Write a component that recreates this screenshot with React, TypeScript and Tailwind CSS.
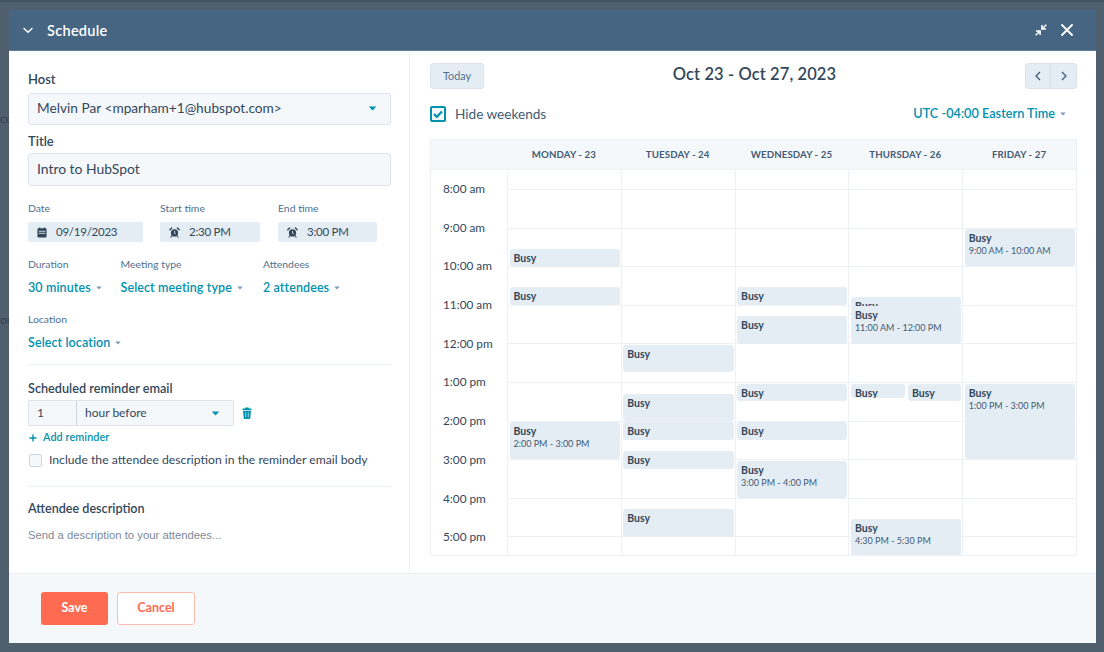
import React from "react";

const Caret = ({ className = "" }: { className?: string }) => (
  <svg viewBox="0 0 10 6" className={className}><path d="M0.5 0.5h9L5 5.5z" fill="currentColor" /></svg>
);

const Alarm = () => (
  <svg viewBox="0 0 14 14" className="w-[11px] h-[11px] text-[#33475b] shrink-0">
    <circle cx="7" cy="7.6" r="4.6" fill="currentColor" />
    <path d="M1 3.6 3.4 1.4M13 3.6 10.6 1.4" stroke="currentColor" strokeWidth="1.8" strokeLinecap="round" />
    <path d="M3.4 11.5 2.4 13M10.6 11.5l1 1.5" stroke="currentColor" strokeWidth="1.3" strokeLinecap="round" />
    <path d="M7 5v2.8l1.8 1" stroke="#e5edf4" strokeWidth="1.1" fill="none" />
  </svg>
);

const CalIcon = () => (
  <svg viewBox="0 0 12 13" className="w-[10px] h-[11px] text-[#33475b] shrink-0">
    <path d="M1.5 1.5h1V.5h1.5v1h4v-1h1.5v1h1A1 1 0 0 1 11.5 2.5V11a1.5 1.5 0 0 1-1.5 1.5H2A1.5 1.5 0 0 1 .5 11V2.5a1 1 0 0 1 1-1z" fill="currentColor" />
    <path d="M2 5h8M2 7.5h8" stroke="#e5edf4" strokeWidth="1" />
  </svg>
);

const Dropdown = ({ label, text, className = "" }: { label: string; text: string; className?: string }) => (
  <div className={className}>
    <div className="text-[10.4px] leading-[14px] text-[#516f90]">{label}</div>
    <div className="mt-[7px] flex items-center gap-[5px] text-[12.5px] tracking-[0.1px] leading-[20px] font-semibold text-[#0091ae] whitespace-nowrap">
      {text}
      <Caret className="w-[6px] h-[4px] text-[#7c98b6]" />
    </div>
  </div>
);

const Pill = ({ w, icon, text }: { w: string; icon: React.ReactNode; text: string }) => (
  <div className={`${w} pl-[9px] gap-[9px] h-[20px] bg-[#e5edf4] rounded-[2px] flex items-center text-[11.5px] tracking-[-0.25px] text-[#33475b]`}>
    {icon}
    <span>{text}</span>
  </div>
);

type Ev = { top: number; h: number; time?: string; left?: number; right?: number };

const columns: { name: string; events: Ev[] }[] = [
  {
    name: "MONDAY - 23",
    events: [
      { top: 79, h: 18 },
      { top: 117, h: 18 },
      { top: 252, h: 37, time: "2:00 PM - 3:00 PM" },
    ],
  },
  {
    name: "TUESDAY - 24",
    events: [
      { top: 175, h: 27 },
      { top: 224, h: 27 },
      { top: 252, h: 18 },
      { top: 281, h: 18 },
      { top: 339, h: 28 },
    ],
  },
  {
    name: "WEDNESDAY - 25",
    events: [
      { top: 117, h: 18 },
      { top: 146, h: 28 },
      { top: 214, h: 17 },
      { top: 252, h: 18 },
      { top: 291, h: 37, time: "3:00 PM - 4:00 PM" },
    ],
  },
  {
    name: "THURSDAY - 26",
    events: [
      { top: 127, h: 9 },
      { top: 136, h: 38, time: "11:00 AM - 12:00 PM" },
      { top: 214, h: 14, right: 56 },
      { top: 214, h: 17, left: 57 },
      { top: 349, h: 37, time: "4:30 PM - 5:30 PM" },
    ],
  },
  {
    name: "FRIDAY - 27",
    events: [
      { top: 59, h: 37, time: "9:00 AM - 10:00 AM" },
      { top: 214, h: 75, time: "1:00 PM - 3:00 PM" },
    ],
  },
];

const hours = ["8:00 am", "9:00 am", "10:00 am", "11:00 am", "12:00 pm", "1:00 pm", "2:00 pm", "3:00 pm", "4:00 pm", "5:00 pm"];

const RowLines = () => (
  <div className="flex flex-col h-full">
    <div className="h-[20px] border-b border-[#edf1f6] shrink-0" />
    {hours.map((h, i) =>
      i < 9 ? <div key={h} className="h-[38.6px] border-b border-[#edf1f6] shrink-0" /> : null
    )}
  </div>
);

export default function App() {
  return (
    <div
      className="relative w-[1104px] h-[652px] overflow-hidden bg-[#505f6d] pt-[10px] pl-[9px] text-[#33475b]"
      style={{ fontFamily: '"Lato", "Noto Sans", sans-serif' }}
    >
      <div className="absolute left-0 right-0 top-0 h-[2px] bg-[#45525f]" />
      <div className="absolute left-0 top-[110px] text-[12px] text-[#33404c]">co</div>
      <div className="absolute left-0 top-[311px] text-[12px] text-[#33404c]">or</div>

      <div className="relative w-[1087px] h-[633px] flex flex-col bg-white">
        {/* header */}
        <div className="h-[41px] shrink-0 bg-[#466582] border-b border-[#5d7c99] flex items-center text-white pl-[14px] pr-[23px]">
          <svg viewBox="0 0 12 8" className="w-[10px] h-[7px]">
            <path d="M1.2 1.5 6 6.2l4.8-4.7" stroke="white" strokeWidth="1.7" fill="none" strokeLinecap="round" strokeLinejoin="round" />
          </svg>
          <span className="ml-[14px] mt-[2px] text-[14.5px] font-semibold tracking-[0.3px]">Schedule</span>
          <div className="ml-auto flex items-center gap-[14px]">
            <svg viewBox="0 0 12 12" className="w-[12px] h-[12px]">
              <path d="M7.2 4.8 11.3.7M6.9 1v4.1H11M4.8 7.2.7 11.3M1 6.9h4.1V11" stroke="white" strokeWidth="1.5" fill="none" />
            </svg>
            <svg viewBox="0 0 12 12" className="w-[12px] h-[12px]">
              <path d="M1 1l10 10M11 1 1 11" stroke="white" strokeWidth="1.8" strokeLinecap="round" />
            </svg>
          </div>
        </div>

        {/* body */}
        <div className="h-[522px] shrink-0 flex">
          {/* left form */}
          <div className="w-[401px] shrink-0 border-r border-[#eaf0f6] pl-[19px] pr-[18px] pt-[19px]">
            <div className="text-[13px] leading-[18px] font-semibold">Host</div>
            <div className="mt-[5px] h-[32px] bg-[#f5f8fa] border border-[#dfe3eb] rounded-[3px] flex items-center pl-[8px] pr-[13px] pb-[2px] text-[13.7px]">
              Melvin Par &lt;mparham+1@hubspot.com&gt;
              <Caret className="ml-auto w-[9px] h-[5px] text-[#0091ae]" />
            </div>
            <div className="mt-[7px] text-[13px] leading-[18px] font-semibold">Title</div>
            <div className="mt-[3px] h-[33px] bg-[#f5f8fa] border border-[#dfe3eb] rounded-[3px] flex items-center pl-[8px] text-[13.9px]">
              Intro to HubSpot
            </div>

            <div className="mt-[15px] flex">
              <div className="w-[132px]">
                <div className="text-[10.4px] leading-[14px] text-[#516f90]">Date</div>
                <div className="mt-[7px]">
                  <Pill w="w-[115px]" icon={<CalIcon />} text="09/19/2023" />
                </div>
              </div>
              <div className="w-[118px]">
                <div className="text-[10.4px] leading-[14px] text-[#516f90]">Start time</div>
                <div className="mt-[7px]">
                  <Pill w="w-[100px]" icon={<Alarm />} text="2:30 PM" />
                </div>
              </div>
              <div>
                <div className="text-[10.4px] leading-[14px] text-[#516f90]">End time</div>
                <div className="mt-[7px]">
                  <Pill w="w-[99px]" icon={<Alarm />} text="3:00 PM" />
                </div>
              </div>
            </div>

            <div className="mt-[15px] flex">
              <Dropdown className="w-[92.5px]" label="Duration" text="30 minutes" />
              <Dropdown className="w-[142.5px]" label="Meeting type" text="Select meeting type" />
              <Dropdown label="Attendees" text="2 attendees" />
            </div>
            <Dropdown className="mt-[14px]" label="Location" text="Select location" />

            <div className="mt-[11px] border-t border-[#eaf0f6]" />

            <div className="mt-[14px] text-[12.7px] leading-[18px] font-semibold whitespace-nowrap">Scheduled reminder email</div>
            <div className="mt-[3px] flex items-center">
              <div className="w-[206px] h-[26px] bg-[#f5f8fa] border border-[#dfe3eb] rounded-[2px] flex items-center text-[12px]">
                <div className="w-[48px] h-full border-r border-[#cbd6e2] pl-[8px] flex items-center">1</div>
                <div className="pl-[8px]">hour before</div>
                <Caret className="ml-auto mr-[13px] w-[9px] h-[5px] text-[#0091ae]" />
              </div>
              <svg viewBox="0 0 10 12" className="ml-[8px] w-[10px] h-[12px] text-[#0091ae]">
                <path d="M3.5.5h3L7 1.5h2.5V3H.5V1.5H3zM1 3.8h8L8.3 11a1 1 0 0 1-1 .9H2.7a1 1 0 0 1-1-.9z" fill="currentColor" />
                <path d="M3.7 5.3v5M6.3 5.3v5" stroke="white" strokeWidth=".6" />
              </svg>
            </div>
            <div className="mt-[3px] flex items-center h-[17px] text-[10.8px] tracking-[0.1px] font-semibold text-[#0091ae]">
              <svg viewBox="0 0 8 8" className="ml-[1px] w-[8px] h-[8px] mr-[6px]">
                <path d="M4 .5v7M.5 4h7" stroke="#0091ae" strokeWidth="1.4" />
              </svg>
              Add reminder
            </div>
            <div className="mt-[6px] flex items-center h-[16px] text-[12.2px] whitespace-nowrap">
              <div className="ml-[1px] w-[13px] h-[13px] shrink-0 bg-[#f5f8fa] border border-[#cbd6e2] rounded-[2px]" />
              <span className="ml-[7px]">Include the attendee description in the reminder email body</span>
            </div>
            <div className="mt-[18px] border-t border-[#eaf0f6]" />
            <div className="mt-[13px] text-[12.6px] leading-[18px] font-semibold">Attendee description</div>
            <div
              className="mt-[8px] text-[11.3px] leading-[18px] text-[#7c8a99]"
              style={{ fontFamily: '"Liberation Sans", sans-serif' }}
            >
              Send a description to your attendees...
            </div>
          </div>

          {/* right calendar */}
          <div className="flex-1 pl-[20px] pr-[19px] pt-[12px] min-w-0">
            <div className="flex items-start h-[26px] relative">
              <div className="w-[54px] h-[26px] bg-[#e5edf4] border border-[#dbe4ee] rounded-[3px] flex items-center justify-center text-[10.8px] text-[#516f90]">
                Today
              </div>
              <div className="flex-1 text-center text-[16.5px] leading-[22px] font-semibold tracking-[0.1px]">Oct 23 - Oct 27, 2023</div>
              <div className="w-[52px] h-[26px] bg-[#e5edf4] border border-[#dbe4ee] rounded-[3px] flex">
                <div className="w-[25px] h-full border-r border-[#d5dfe9] flex items-center justify-center">
                  <svg viewBox="0 0 6 10" className="w-[6px] h-[10px]"><path d="M5 1 1 5l4 4" stroke="#425b76" strokeWidth="1.3" fill="none" /></svg>
                </div>
                <div className="flex-1 flex items-center justify-center">
                  <svg viewBox="0 0 6 10" className="w-[6px] h-[10px]"><path d="m1 1 4 4-4 4" stroke="#425b76" strokeWidth="1.3" fill="none" /></svg>
                </div>
              </div>
            </div>
            <div className="mt-[17px] flex items-center h-[16px]">
              <div className="w-[16px] h-[16px] border-2 border-[#0091ae] rounded-[2px] bg-[#f5f8fa] flex items-center justify-center">
                <svg viewBox="0 0 10 8" className="w-[10px] h-[8px]"><path d="M1 4l2.8 2.8L9 1.4" stroke="#0091ae" strokeWidth="2.2" fill="none" /></svg>
              </div>
              <span className="ml-[9px] text-[13.6px] text-[#425b76]">Hide weekends</span>
              <span className="ml-auto mr-[11px] flex items-center gap-[5px] text-[12.7px] font-semibold text-[#0091ae]">
                UTC -04:00 Eastern Time
                <Caret className="w-[6px] h-[4px] text-[#7c98b6]" />
              </span>
            </div>

            {/* calendar grid */}
            <div className="mt-[17px] w-[647px] h-[417px] border border-[#edf1f6] flex flex-col overflow-hidden">
              <div className="h-[30px] shrink-0 bg-[#f5f8fa] border-b border-[#edf1f6] flex">
                <div className="w-[76px] shrink-0" />
                {columns.map((c) => (
                  <div key={c.name} className="w-[113.8px] shrink-0 flex items-center justify-center text-[9.7px] font-bold tracking-[0.1px] text-[#425b76]">
                    {c.name}
                  </div>
                ))}
              </div>
              <div className="flex flex-1 min-h-0">
                <div className="w-[76px] shrink-0 pl-[12px] pt-[11px]">
                  {hours.map((h) => (
                    <div key={h} className="h-[38.7px] text-[11.8px] leading-[16px] text-[#33475b]">{h}</div>
                  ))}
                </div>
                {columns.map((c) => (
                  <div key={c.name} className="relative w-[113.8px] shrink-0 border-l border-[#edf1f6]">
                    <RowLines />
                    {c.events.map((e, i) => (
                      <div
                        key={i}
                        className="absolute bg-[#e5edf4] rounded-[3px] overflow-hidden pl-[4px] pt-[3px]"
                        style={{ top: e.top, height: e.h, left: 1.5 + (e.left ?? 0), right: 1 + (e.right ?? 0) }}
                      >
                        <div className="text-[10.5px] leading-[13px] font-bold text-[#33475b]">Busy</div>
                        {e.time && <div className="text-[9px] leading-[11px] text-[#425b76]">{e.time}</div>}
                      </div>
                    ))}
                  </div>
                ))}
              </div>
            </div>
          </div>
        </div>

        {/* footer */}
        <div className="flex-1 bg-[#f5f8fa] border-t border-[#eaf0f6] flex items-start pl-[32px] pt-[18px] gap-[9px]">
          <div className="w-[67px] h-[33px] bg-[#ff6b50] rounded-[3px] flex items-center justify-center text-[12.5px] font-bold text-white">
            Save
          </div>
          <div className="w-[78px] h-[33px] bg-white border border-[#ffbcac] rounded-[3px] flex items-center justify-center text-[12.5px] font-bold text-[#ff6b50]">
            Cancel
          </div>
        </div>
      </div>
    </div>
  );
}
